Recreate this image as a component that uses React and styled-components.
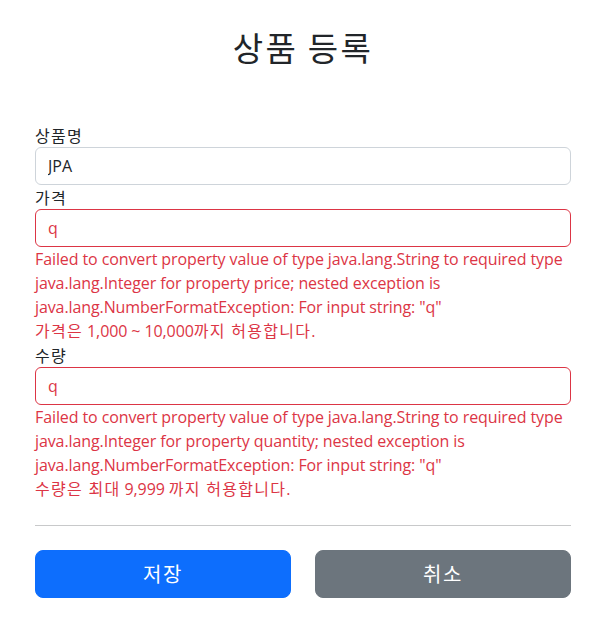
import React from "react";
import styled, { createGlobalStyle } from "styled-components";

const Global = createGlobalStyle`
  html, body { margin: 0; padding: 0; background: #fff; }
  body {
    font-family: "Open Sans", "Noto Sans CJK KR", sans-serif;
    font-size: 16px;
    line-height: 1.5;
    color: #212529;
  }
  * { box-sizing: border-box; }
`;

const Container = styled.div`
  width: 536px;
  margin-left: 35px;
  padding-top: 28px;
`;

const Header = styled.h2`
  margin: 0 0 55px;
  text-align: center;
  font-family: "Noto Sans CJK KR", sans-serif;
  font-size: 33px;
  font-weight: 400;
  line-height: 1.2;
  letter-spacing: 0.07em;
`;

const Form = styled.form`
  display: flex;
  flex-direction: column;
`;

const Label = styled.label`
  display: block;
  font-family: "Noto Sans CJK KR", sans-serif;
  line-height: 24px;
  letter-spacing: 0.08em;
`;

const Input = styled.input`
  display: block;
  width: 100%;
  height: 38px;
  padding: 6px 12px;
  font: inherit;
  line-height: 24px;
  color: ${(p) => (p.$invalid ? "#dc3545" : "#212529")};
  background: #fff;
  border: 1px solid ${(p) => (p.$invalid ? "#dc3545" : "#ced4da")};
  border-radius: 6px;
  outline: none;
`;

const FieldError = styled.div`
  color: #dc3545;
  line-height: 24px;
  letter-spacing: -0.1px;
`;

const Korean = styled.span`
  letter-spacing: 0.08em;
`;

const Divider = styled.hr`
  margin: 24px 0;
  border: 0;
  border-top: 1px solid #c8c9ca;
`;

const ButtonRow = styled.div`
  display: grid;
  grid-template-columns: 1fr 1fr;
  gap: 24px;
`;

const Button = styled.button`
  height: 48px;
  border: 1px solid ${(p) => p.$bg};
  background: ${(p) => p.$bg};
  color: #fff;
  font-family: "Noto Sans CJK KR", sans-serif;
  font-size: 20px;
  line-height: 30px;
  letter-spacing: 0.08em;
  border-radius: 8px;
  padding: 8px 16px;
`;

export default function App() {
  return (
    <>
      <Global />
      <Container>
        <Header>상품 등록</Header>
        <Form onSubmit={(e) => e.preventDefault()}>
          <Label htmlFor="itemName">상품명</Label>
          <Input id="itemName" defaultValue="JPA" />
          <Label htmlFor="price">가격</Label>
          <Input id="price" defaultValue="q" $invalid />
          <FieldError>
            Failed to convert property value of type java.lang.String to required type java.lang.Integer for property price; nested exception is java.lang.NumberFormatException: For input string: "q"
          </FieldError>
          <FieldError>
            <Korean>가격은</Korean> 1,000 ~ 10,000<Korean>까지 허용합니다.</Korean>
          </FieldError>
          <Label htmlFor="quantity">수량</Label>
          <Input id="quantity" defaultValue="q" $invalid />
          <FieldError>
            Failed to convert property value of type java.lang.String to required type java.lang.Integer for property quantity; nested exception is java.lang.NumberFormatException: For input string: "q"
          </FieldError>
          <FieldError>
            <Korean>수량은 최대</Korean> 9,999 <Korean>까지 허용합니다.</Korean>
          </FieldError>
          <Divider />
          <ButtonRow>
            <Button type="submit" $bg="#0d6efd">저장</Button>
            <Button type="button" $bg="#6c757d">취소</Button>
          </ButtonRow>
        </Form>
      </Container>
    </>
  );
}
